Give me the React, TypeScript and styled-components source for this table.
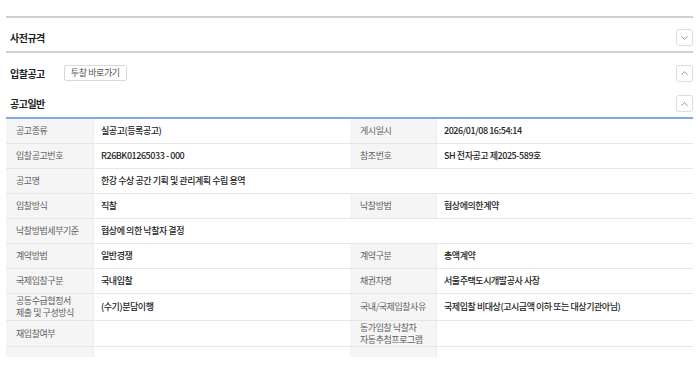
import React from "react";
import styled, { createGlobalStyle } from "styled-components";

const Global = createGlobalStyle`
  html, body { margin: 0; padding: 0; background: #fff; }
  body { font-family: "Noto Sans CJK KR", "Noto Sans", sans-serif; color: #333; }
`;

const Page = styled.div`
  padding: 16px 7px 0 6px;
  width: 700px;
  box-sizing: border-box;
`;

const Divider = styled.div`
  height: 2px;
  background: #cfcfcf;
`;

const SectionRow = styled.div<{ $h: number; $top?: number }>`
  display: flex;
  align-items: center;
  box-sizing: border-box;
  height: ${(p) => p.$h}px;
  padding: ${(p) => p.$top ?? 0}px 0 0 4px;
`;

const Title = styled.h3`
  margin: 0;
  font-size: 10px;
  font-weight: 700;
  letter-spacing: -0.5px;
  color: #222;
`;

const LinkButton = styled.button`
  margin-left: 19px;
  height: 16px;
  padding: 0 6px;
  border: 1px solid #d9d9d9;
  border-radius: 2px;
  background: #fff;
  font-family: inherit;
  font-size: 9px;
  letter-spacing: -0.4px;
  color: #555;
  line-height: 14px;
`;

const Toggle = styled.button`
  margin-left: auto;
  width: 17px;
  height: 17px;
  padding: 0;
  border: 1px solid #dcdcdc;
  border-radius: 3px;
  background: #fff;
  display: flex;
  align-items: center;
  justify-content: center;
  svg { display: block; }
`;

const Chevron = ({ up }: { up?: boolean }) => (
  <svg width="7" height="4" viewBox="0 0 7 4">
    <path
      d={up ? "M0.5 3.5 L3.5 0.8 L6.5 3.5" : "M0.5 0.5 L3.5 3.2 L6.5 0.5"}
      fill="none"
      stroke="#8a8a8a"
      strokeWidth="0.9"
    />
  </svg>
);

const TableWrap = styled.div`
  border-top: 2px solid #86a9e6;
  height: 238px;
  overflow: hidden;
`;

const Grid = styled.div`
  display: grid;
  grid-template-columns: 88px 256px 87px 1fr;
`;

const Cell = styled.div<{ $label?: boolean; $span?: number; $h?: number }>`
  display: flex;
  align-items: center;
  min-height: ${(p) => p.$h ?? 25}px;
  box-sizing: border-box;
  border-bottom: 1px solid #e6e6e6;
  padding: ${(p) => (p.$label ? "0 6px 0 10px" : "0 8px 0 7px")};
  background: ${(p) => (p.$label ? "#f5f5f5" : "#fff")};
  color: ${(p) => (p.$label ? "#5e5e5e" : "#222")};
  font-weight: ${(p) => (p.$label ? 400 : 500)};
  border-right: ${(p) => (p.$label ? "1px solid #ececec" : "none")};
  font-size: 9px;
  letter-spacing: -0.45px;
  line-height: 12px;
  grid-column: span ${(p) => p.$span ?? 1};
`;

type Row = { cells: { text?: React.ReactNode; label?: boolean; span?: number }[]; h?: number };

const rows: Row[] = [
  { cells: [{ text: "공고종류", label: true }, { text: "실공고(등록공고)" }, { text: "게시일시", label: true }, { text: "2026/01/08 16:54:14" }] },
  { cells: [{ text: "입찰공고번호", label: true }, { text: "R26BK01265033 - 000" }, { text: "참조번호", label: true }, { text: "SH 전자공고 제2025-589호" }] },
  { cells: [{ text: "공고명", label: true }, { text: "한강 수상 공간 기획 및 관리계획 수립 용역", span: 3 }] },
  { cells: [{ text: "입찰방식", label: true }, { text: "직찰" }, { text: "낙찰방법", label: true }, { text: "협상에의한계약" }] },
  { cells: [{ text: "낙찰방법세부기준", label: true }, { text: "협상에 의한 낙찰자 결정", span: 3 }] },
  { cells: [{ text: "계약방법", label: true }, { text: "일반경쟁" }, { text: "계약구분", label: true }, { text: "총액계약" }] },
  { cells: [{ text: "국제입찰구분", label: true }, { text: "국내입찰" }, { text: "채권자명", label: true }, { text: "서울주택도시개발공사 사장" }] },
  {
    h: 27,
    cells: [
      { text: <>공동수급협정서<br />제출 및 구성방식</>, label: true },
      { text: "(수기)분담이행" },
      { text: "국내/국제입찰사유", label: true },
      { text: "국제입찰 비대상(고시금액 이하 또는 대상기관아님)" },
    ],
  },
  {
    h: 26,
    cells: [
      { text: "재입찰여부", label: true },
      { text: "" },
      { text: <>동가입찰 낙찰자<br />자동추첨프로그램</>, label: true },
      { text: "" },
    ],
  },
  { cells: [{ text: "", label: true }, { text: "" }, { text: "", label: true }, { text: "" }] },
];

export default function App() {
  return (
    <Page>
      <Global />
      <Divider />
      <SectionRow $h={33} $top={6}>
        <Title>사전규격</Title>
        <Toggle aria-label="펼치기"><Chevron /></Toggle>
      </SectionRow>
      <Divider />
      <SectionRow $h={37} $top={3}>
        <Title>입찰공고</Title>
        <LinkButton>투찰 바로가기</LinkButton>
        <Toggle aria-label="접기"><Chevron up /></Toggle>
      </SectionRow>
      <SectionRow $h={27}>
        <Title>공고일반</Title>
        <Toggle aria-label="접기"><Chevron up /></Toggle>
      </SectionRow>
      <TableWrap>
        <Grid>
          {rows.map((r, i) =>
            r.cells.map((c, j) => (
              <Cell key={`${i}-${j}`} $label={c.label} $span={c.span} $h={r.h}>
                {c.text}
              </Cell>
            ))
          )}
        </Grid>
      </TableWrap>
    </Page>
  );
}
